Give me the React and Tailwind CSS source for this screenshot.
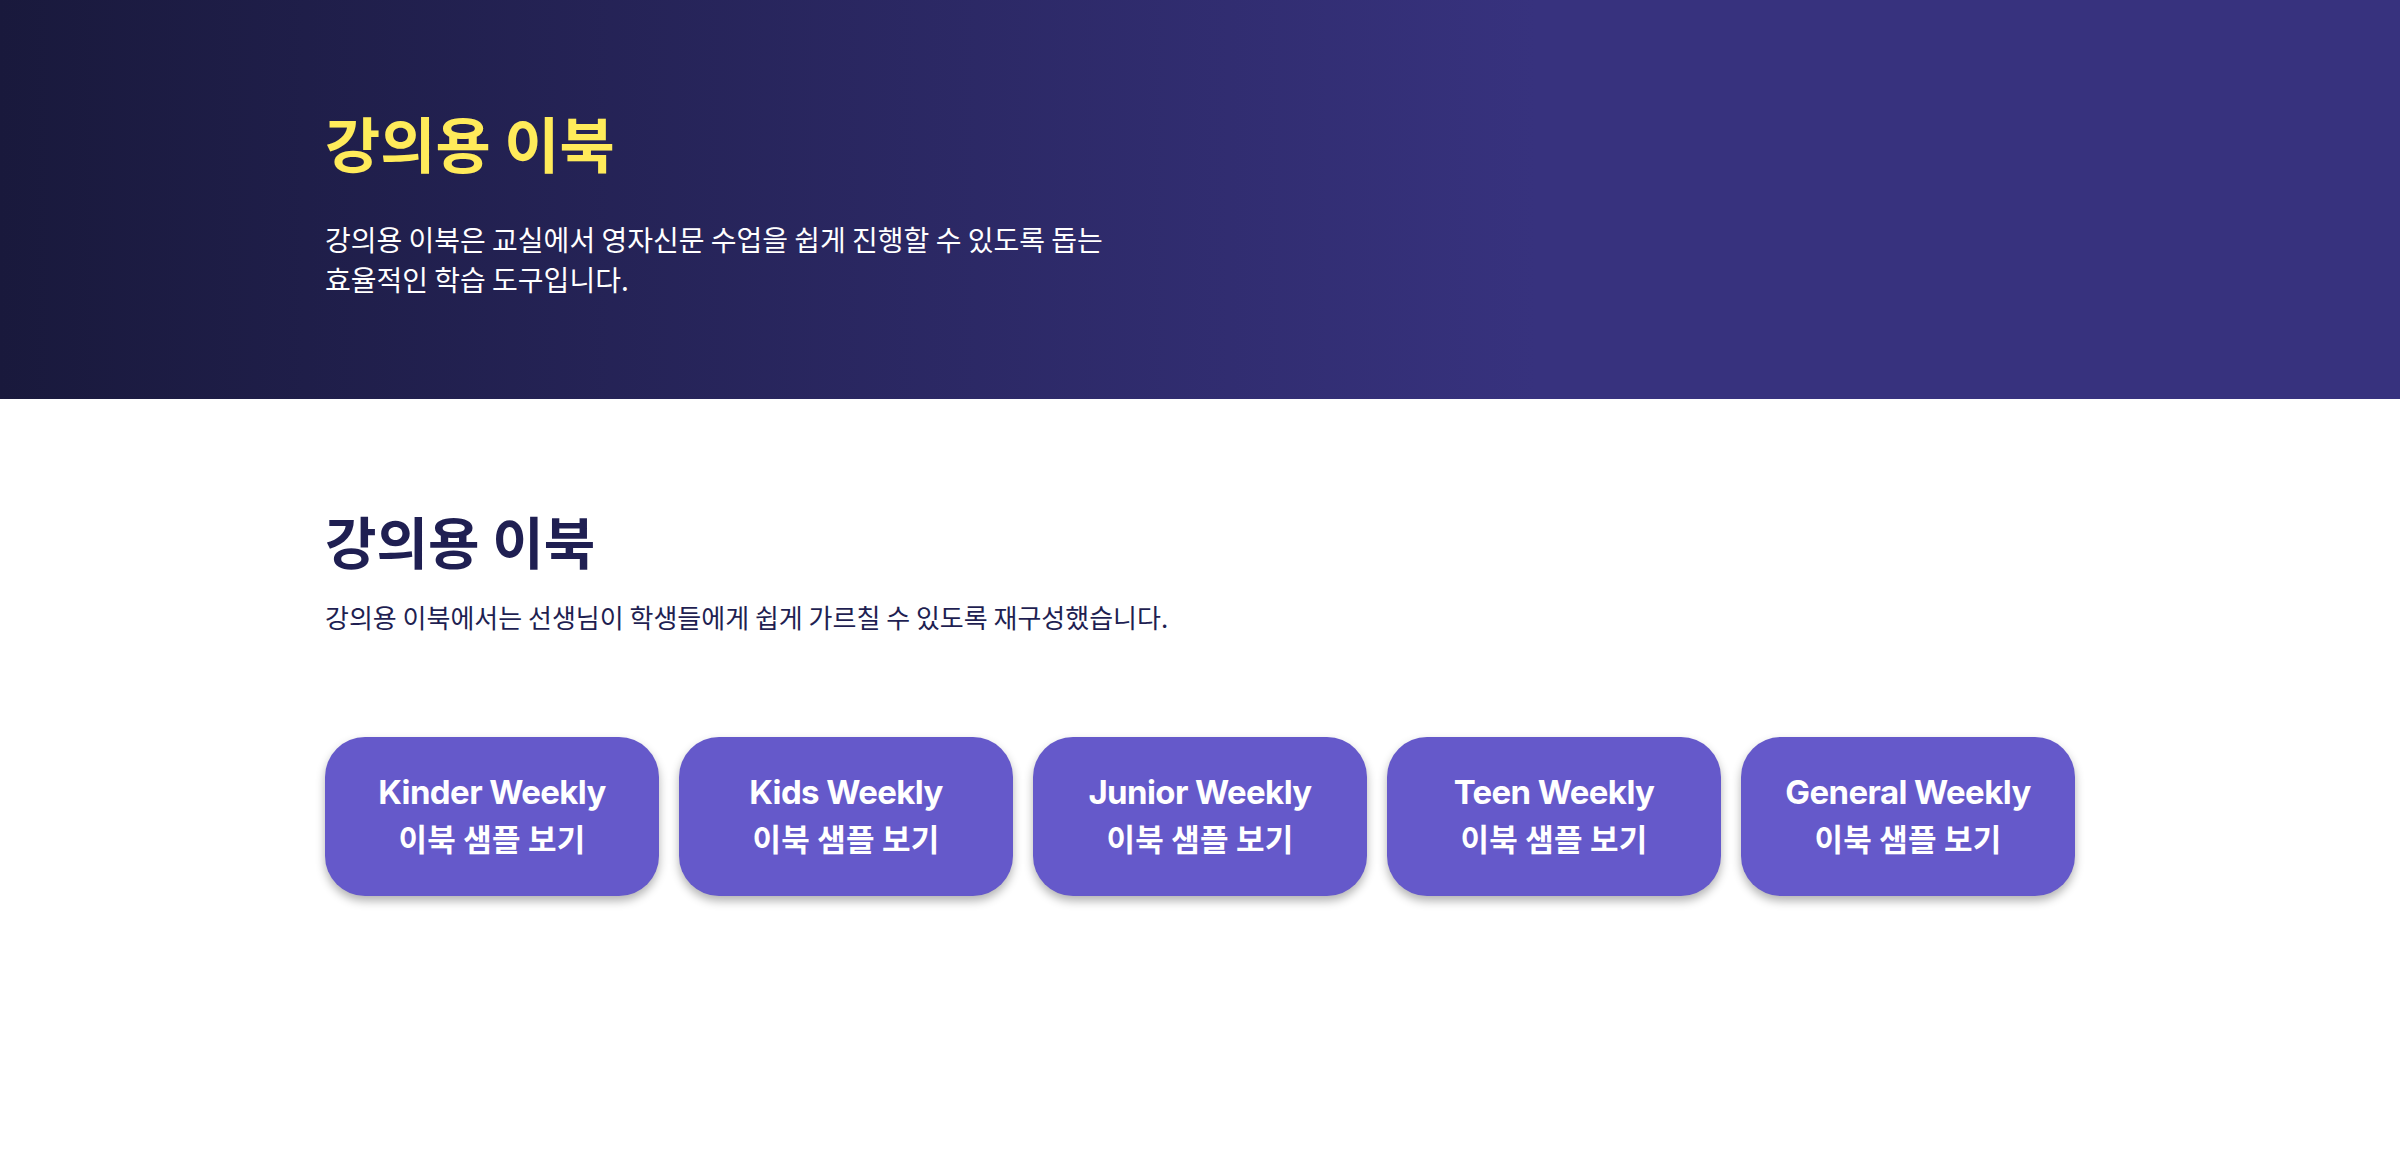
export default function App() {
  const items = ["Kinder Weekly", "Kids Weekly", "Junior Weekly", "Teen Weekly", "General Weekly"];
  const kr = { fontFamily: '"Noto Sans CJK KR", "Noto Sans", sans-serif' };
  return (
    <div className="min-h-[1150px] bg-white" style={kr}>
      <header className="h-[399px] bg-[linear-gradient(90deg,#19193c_0%,#37327e_64%,#37327e_100%)] pt-[106px]">
        <div className="mx-auto w-[1750px]">
          <h1 className="text-[60px] font-bold leading-[1.2] text-[#ffeb5a]">강의용 이북</h1>
          <p className="mt-[41px] text-[28px] leading-[40px] text-white">
            강의용 이북은 교실에서 영자신문 수업을 쉽게 진행할 수 있도록 돕는
            <br />
            효율적인 학습 도구입니다.
          </p>
        </div>
      </header>
      <section className="mx-auto w-[1750px] pt-[107px]">
        <h2 className="text-[56px] font-bold leading-[1.2] text-[#1f1f52]">강의용 이북</h2>
        <p className="mt-[26px] text-[26px] leading-[36px] text-[#1f1f52]">
          강의용 이북에서는 선생님이 학생들에게 쉽게 가르칠 수 있도록 재구성했습니다.
        </p>
        <div className="mt-[102px] grid grid-cols-5 gap-[20px]">
          {items.map((t) => (
            <a
              key={t}
              href="#"
              className="flex h-[159px] flex-col items-center justify-center rounded-[40px] bg-[#6559ca] pb-[4px] text-white shadow-[0_5px_10px_rgba(0,0,0,0.3)]"
            >
              <span
                className="text-[33px] font-bold leading-[45px] tracking-[-0.6px]"
                style={{ fontFamily: 'Inter, "Noto Sans CJK KR", sans-serif' }}
              >
                {t}
              </span>
              <span className="text-[31px] font-bold leading-[45px] tracking-[0.2px]">이북 샘플 보기</span>
            </a>
          ))}
        </div>
      </section>
    </div>
  );
}
